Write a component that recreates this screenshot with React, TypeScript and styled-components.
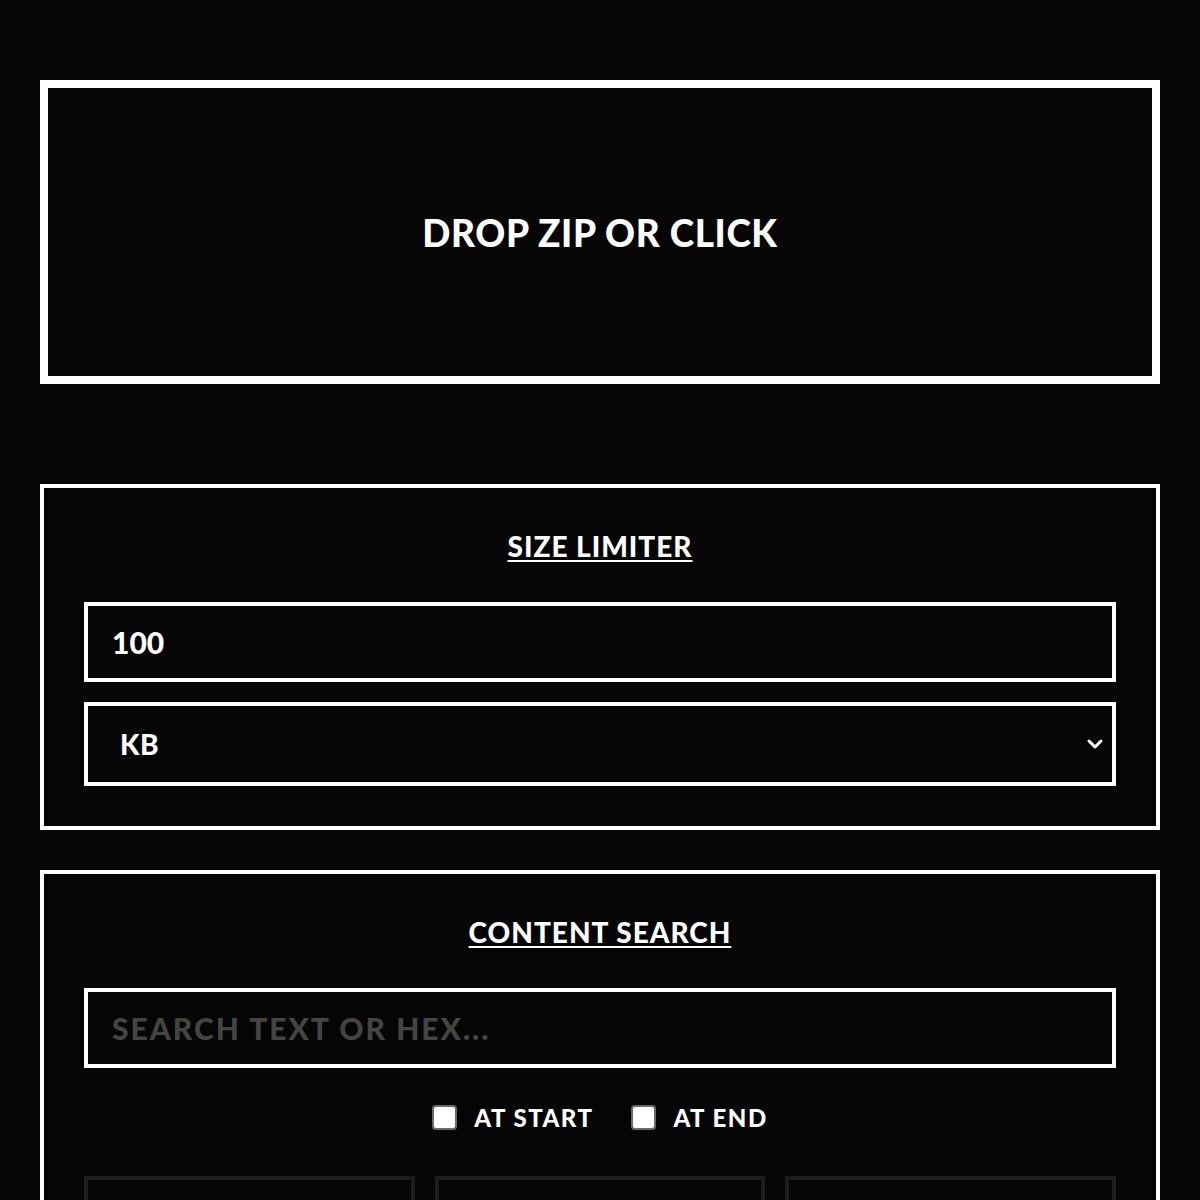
import React from "react";
import styled, { createGlobalStyle } from "styled-components";

const Global = createGlobalStyle`
  html, body { margin: 0; padding: 0; background: #050505; }
  body { font-family: Lato, "Noto Sans", sans-serif; color: #fff; }
  * { box-sizing: border-box; }
`;

const Page = styled.div`
  padding: 80px 40px 40px;
  display: flex;
  flex-direction: column;
`;

const DropZone = styled.div`
  height: 304px;
  border: 8px solid #fff;
  background: #050505;
  display: flex;
  align-items: center;
  justify-content: center;
  font-weight: 900;
  font-size: 37px;
  letter-spacing: 0.6px;
  text-transform: uppercase;
  cursor: pointer;
  margin-bottom: 100px;
`;

const Panel = styled.section`
  border: 4px solid #fff;
  padding: 40px;
  margin-bottom: 40px;
  display: flex;
  flex-direction: column;
`;

const Title = styled.h2`
  margin: 0 0 38px;
  font-size: 28px;
  line-height: 36px;
  font-weight: 900;
  letter-spacing: 1px;
  text-align: center;
  text-decoration: underline;
  text-decoration-thickness: 2px;
  text-underline-offset: 3px;
  text-transform: uppercase;
`;

const TextInput = styled.input`
  height: 80px;
  width: 100%;
  border: 4px solid #fff;
  background: #050505;
  color: #fff;
  font-family: inherit;
  font-weight: 900;
  font-size: 30px;
  padding: 0 24px;
  outline: none;
  text-transform: uppercase;
  &::placeholder { color: #444; letter-spacing: 2px; }
`;

const SelectWrap = styled.div`
  position: relative;
  margin-top: 20px;
`;

const Select = styled.select`
  appearance: none;
  height: 84px;
  width: 100%;
  border: 4px solid #fff;
  background: #050505;
  color: #fff;
  font-family: inherit;
  font-weight: 900;
  font-size: 28px;
  letter-spacing: 0.5px;
  padding: 0 32px;
  outline: none;
`;

const Chevron = styled.svg`
  position: absolute;
  right: 12px;
  top: 50%;
  transform: translateY(-50%);
  pointer-events: none;
`;

const CheckRow = styled.div`
  display: flex;
  justify-content: center;
  gap: 38px;
  margin: 30px 0 40px;
  height: 38px;
  align-items: center;
`;

const CheckLabel = styled.label`
  display: flex;
  align-items: center;
  gap: 17px;
  font-weight: 900;
  font-size: 24px;
  letter-spacing: 1.5px;
  text-transform: uppercase;
`;

const Box = styled.input`
  appearance: none;
  margin: 0;
  width: 25px;
  height: 25px;
  border: 2px solid #6a6a6a;
  border-radius: 4px;
  background: #fff;
`;

const Grid = styled.div`
  display: grid;
  grid-template-columns: repeat(3, 1fr);
  gap: 20px;
`;

const Cell = styled.div`
  height: 120px;
  border: 4px solid #1c1c1c;
`;

export default function App() {
  return (
    <>
      <Global />
      <Page>
        <DropZone>Drop zip or click</DropZone>
        <Panel>
          <Title>Size Limiter</Title>
          <TextInput defaultValue="100" />
          <SelectWrap>
            <Select defaultValue="KB">
              <option>B</option>
              <option>KB</option>
              <option>MB</option>
            </Select>
            <Chevron width="18" height="12" viewBox="0 0 18 12">
              <path d="M3 3l6 6 6-6" fill="none" stroke="#fff" strokeWidth="3" strokeLinecap="round" strokeLinejoin="round" />
            </Chevron>
          </SelectWrap>
        </Panel>
        <Panel>
          <Title>Content Search</Title>
          <TextInput placeholder="SEARCH TEXT OR HEX..." />
          <CheckRow>
            <CheckLabel><Box type="checkbox" />At start</CheckLabel>
            <CheckLabel><Box type="checkbox" />At end</CheckLabel>
          </CheckRow>
          <Grid>
            <Cell />
            <Cell />
            <Cell />
          </Grid>
        </Panel>
      </Page>
    </>
  );
}
